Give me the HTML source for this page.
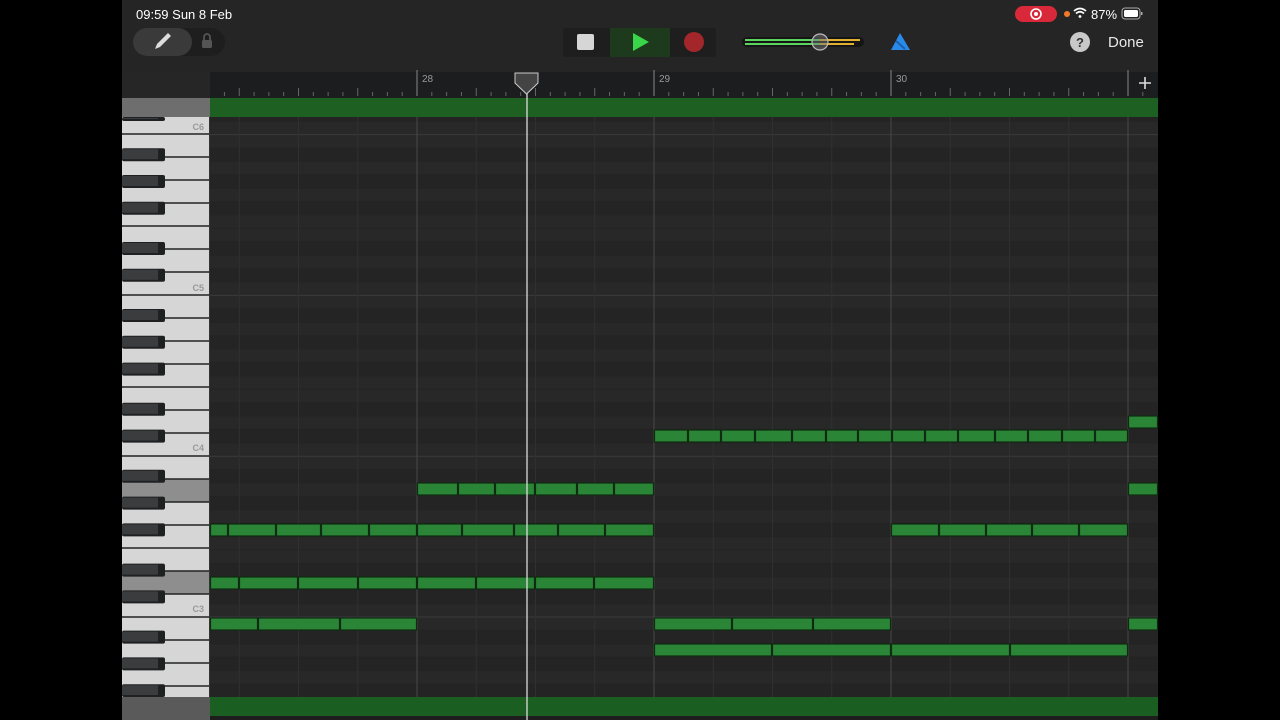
<!DOCTYPE html>
<html><head><meta charset="utf-8">
<style>
html,body{margin:0;padding:0;background:#000;width:1280px;height:720px;overflow:hidden;font-family:"Liberation Sans",sans-serif}
#app{position:absolute;left:122px;top:0;width:1036px;height:720px;background:#262626;overflow:hidden}
</style></head><body>
<div id="app"></div>
<svg id="s" width="1280" height="720" style="position:absolute;left:0;top:0;display:block" xmlns="http://www.w3.org/2000/svg">
<rect x="122" y="0" width="1036" height="72" fill="#252525"/>
<text x="136" y="19" fill="#fff" font-size="13" font-family="Liberation Sans">09:59  Sun 8 Feb</text>
<rect x="1015" y="6" width="42" height="16" rx="8" fill="#d9283a"/>
<circle cx="1036" cy="14" r="5" fill="none" stroke="#fff" stroke-width="1.6"/><circle cx="1036" cy="14" r="2" fill="#fff"/>
<circle cx="1067" cy="14" r="3" fill="#f07a2a"/>
<path d="M1074 11 q6 -5 12 0 M1076 13.5 q4 -3.5 8 0" stroke="#fff" stroke-width="1.6" fill="none"/><circle cx="1080" cy="16.5" r="1.4" fill="#fff"/>
<text x="1091" y="19" fill="#fff" font-size="13" font-family="Liberation Sans">87%</text>
<rect x="1122" y="8" width="18" height="11" rx="3" fill="none" stroke="#aaa" stroke-width="1"/><rect x="1124" y="10" width="14" height="7" rx="1.5" fill="#fff"/><rect x="1141" y="12" width="1.5" height="3" fill="#aaa"/>
<rect x="133" y="28" width="92" height="28" rx="14" fill="#1e1e1e"/>
<rect x="133" y="28" width="59" height="28" rx="14" fill="#3a3a3a"/>
<path d="M155 49 l2 -5 l11 -11 l3 3 l-11 11 z" fill="#ddd"/>
<rect x="202" y="40" width="10" height="8" rx="1.5" fill="#555"/><path d="M204 40 v-3 a3 3 0 0 1 6 0 v3" stroke="#555" stroke-width="1.8" fill="none"/>
<rect x="563" y="28" width="153" height="29" rx="3" fill="#1e1e1e"/>
<rect x="610" y="28" width="60" height="29" fill="#1d3a1d"/>
<rect x="577" y="34" width="17" height="16" rx="2" fill="#d6d6d6"/>
<path d="M633 33 l16 9 l-16 9 z" fill="#3ad64a"/>
<circle cx="694" cy="42" r="10" fill="#a3262a"/>
<rect x="742" y="37" width="122" height="10" rx="5" fill="#151515"/>
<rect x="745" y="39" width="75" height="2" fill="#5ad45e"/><rect x="820" y="39" width="40" height="2" fill="#e0b030"/>
<rect x="745" y="43" width="75" height="2" fill="#5ad45e"/><rect x="820" y="43" width="34" height="2" fill="#e0b030"/>
<circle cx="820" cy="42" r="8" fill="rgba(120,120,120,0.5)" stroke="#bbb" stroke-width="1.2"/>
<path d="M891 50 l9 -17 l10 17 z" fill="#2a8ae8"/><path d="M896 41 l9 8" stroke="#1b5fb0" stroke-width="2"/>
<circle cx="1080" cy="42" r="10" fill="#c8c8c8"/>
<text x="1080" y="47" fill="#333" font-size="13" font-weight="bold" text-anchor="middle" font-family="Liberation Sans">?</text>
<text x="1108" y="47" fill="#e8e8e8" font-size="15" font-family="Liberation Sans">Done</text>
<rect x="210" y="72" width="948" height="26" fill="#1c1d1e"/>
<rect x="122" y="72" width="88" height="26" fill="#262626"/>
<g id="ruler" stroke="#666" stroke-width="1"></g>
<text x="422" y="82" fill="#999" font-size="10" font-family="Liberation Sans">28</text>
<text x="659" y="82" fill="#999" font-size="10" font-family="Liberation Sans">29</text>
<text x="896" y="82" fill="#999" font-size="10" font-family="Liberation Sans">30</text>
<path d="M1139 83 h12 M1145 77 v12" stroke="#ddd" stroke-width="1.6"/>
<rect x="210" y="98" width="948" height="19" fill="#1e5f22"/>
<rect x="122" y="98" width="88" height="19" fill="#6e6e6e"/>
<g id="grid"></g>
<g id="notes"></g>
<g id="kb"></g>
<text x="204" y="130" fill="#999" font-size="9" font-weight="bold" text-anchor="end" font-family="Liberation Sans">C6</text>
<text x="204" y="291" fill="#999" font-size="9" font-weight="bold" text-anchor="end" font-family="Liberation Sans">C5</text>
<text x="204" y="451" fill="#999" font-size="9" font-weight="bold" text-anchor="end" font-family="Liberation Sans">C4</text>
<text x="204" y="612" fill="#999" font-size="9" font-weight="bold" text-anchor="end" font-family="Liberation Sans">C3</text>
<rect x="210" y="697" width="948" height="19" fill="#1b5e21"/>
<rect x="122" y="697" width="88" height="23" fill="#5a5a5a"/>
<rect x="210" y="716" width="948" height="4" fill="#1e1e1e"/>
<line x1="527" y1="86" x2="527" y2="720" stroke="#e8e8e8" stroke-width="1.2"/>
<path d="M515 73 h23 v10 l-11.5 11 l-11.5 -11 z" fill="#444" stroke="#ccc" stroke-width="1"/>
</svg>
<script>
(function(){
var NS="http://www.w3.org/2000/svg";
function el(p,t,a){var e=document.createElementNS(NS,t);for(var k in a)e.setAttribute(k,a[k]);p.appendChild(e);return e;}
var ruler=document.getElementById('ruler'),grid=document.getElementById('grid'),notes=document.getElementById('notes'),kb=document.getElementById('kb');
var bar0=417-237,i,x,k,n,yy,hh,y;
for(i=0;i<=80;i++){x=bar0+i*237/16; if(x<212||x>1157)continue;
 var h=(i%16==0)?26:(i%4==0?8:4);
 el(ruler,'line',{x1:x,y1:96-h,x2:x,y2:96,stroke:(i%16==0)?'#888':'#666'});}
var st=13.4, c4=449.5;
var blackSet={1:1,3:1,6:1,8:1,10:1};
for(k=-40;k<=40;k++){y=c4-k*st-st/2; if(y>697||y+st<117)continue;
 n=((k%12)+12)%12;
 yy=Math.max(117,y);hh=Math.min(697,y+st)-yy;
 el(grid,'rect',{x:210,y:yy,width:948,height:hh,fill:blackSet[n]?'#242424':'#282828'});
 if(y+st<697) el(grid,'line',{x1:210,y1:y+st,x2:1158,y2:y+st,stroke:(n==0)?'#3a3a3a':'#232323','stroke-width':1});
}
for(i=0;i<=80;i++){x=bar0+i*237/16; if(x<211||x>1157)continue;
 if(i%16==0) el(grid,'line',{x1:x,y1:117,x2:x,y2:697,stroke:'#484848'});
 else if(i%4==0) el(grid,'line',{x1:x,y1:117,x2:x,y2:697,stroke:'#303030'});}
function row(y,b){for(var j=0;j<b.length-1;j++){el(notes,'rect',{x:b[j]+0.5,y:y-6,width:b[j+1]-b[j]-1,height:12,fill:'#2a8636',stroke:'#0f2b12','stroke-width':1.2});}}
row(436,[654,688,721,755,792,826,858,892,925,958,995,1028,1062,1095,1128]);
row(422,[1128,1158]);
row(489,[417,458,495,535,577,614,654]);row(489,[1128,1158]);
row(530,[210,228,276,321,369,417,462,514,558,605,654]);
row(530,[891,939,986,1032,1079,1128]);
row(583,[210,239,298,358,417,476,535,594,654]);
row(624,[210,258,340,417]);row(624,[654,732,813,891]);row(624,[1128,1158]);
row(650,[654,772,891,1010,1128]);
el(kb,'rect',{x:122,y:117,width:88,height:580,fill:'#d6d6d6'});
for(var o=-2;o<=3;o++){for(var w=0;w<7;w++){var kbot=456-o*161-w*23; var ktop=kbot-23;
 if(kbot<117||ktop>697)continue;
 if(o==-1&&(w==5||w==1)) el(kb,'rect',{x:122,y:Math.max(117,ktop),width:88,height:23,fill:'#8e8e8e'});
 el(kb,'line',{x1:122,y1:kbot,x2:209,y2:kbot,stroke:'#222','stroke-width':1.4});}}
for(k=-40;k<=40;k++){n=((k%12)+12)%12; if(!blackSet[n])continue;
 var cy=c4-k*st; if(cy<110||cy>697)continue;
 var bt=Math.max(117,cy-6.5),bb=Math.min(697,cy+6.5);
 el(kb,'rect',{x:122,y:bt,width:43,height:bb-bt,rx:2,fill:'#1e2022'});
 el(kb,'rect',{x:122,y:bt+1,width:36,height:Math.max(0,bb-bt-3),fill:'#3a3c3e'});}
el(kb,'line',{x1:209.5,y1:117,x2:209.5,y2:697,stroke:'#333'});
})();
</script>
</body></html>
